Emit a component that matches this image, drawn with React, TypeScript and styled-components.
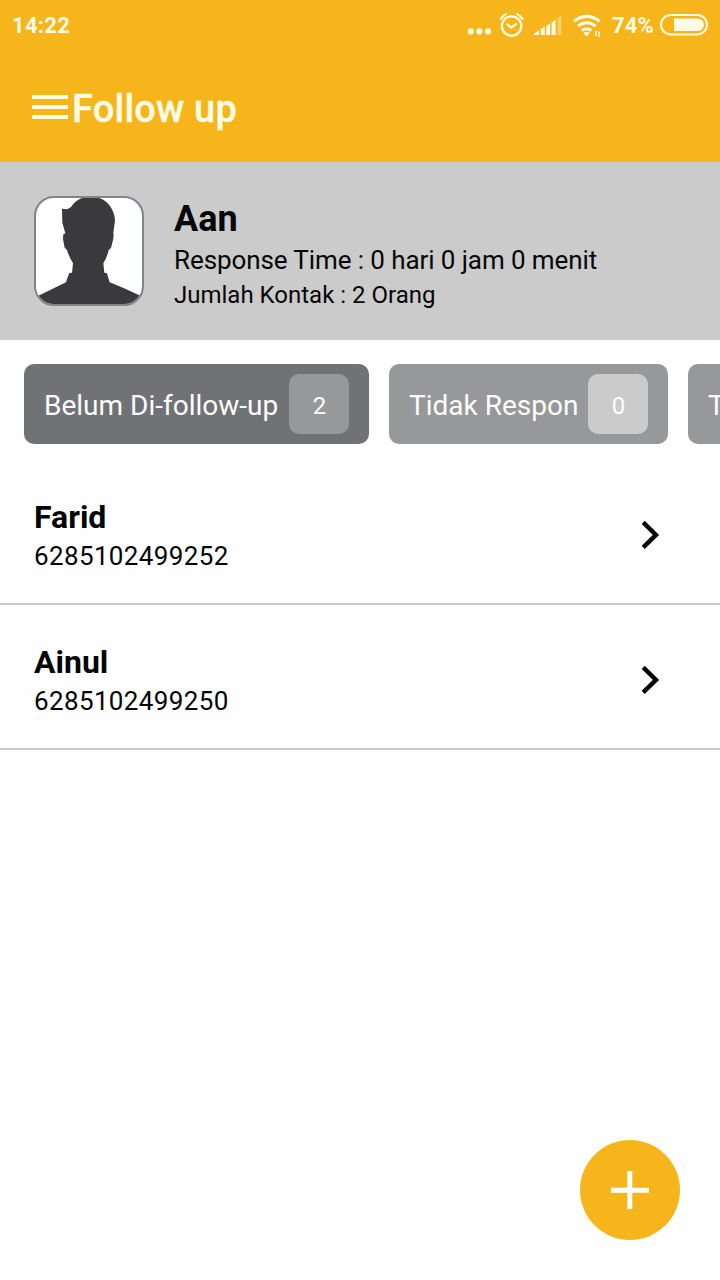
import React from 'react';
import styled, { createGlobalStyle } from 'styled-components';

const YELLOW = '#f5b51b';
const CREAM = '#fffce6';

const GlobalStyle = createGlobalStyle`
  *, *::before, *::after { box-sizing: border-box; }
  html, body { margin: 0; padding: 0; background: #fefefe; }
  body { font-family: Roboto, "Liberation Sans", sans-serif; color: #060606; }
  button { font: inherit; border: 0; padding: 0; margin: 0; }
`;

const Screen = styled.div`
  position: relative;
  display: flex;
  flex-direction: column;
  width: 720px;
  height: 1280px;
  overflow: hidden;
  background: #fefefe;
`;

const StatusBar = styled.div`
  display: flex;
  align-items: flex-start;
  justify-content: space-between;
  height: 50px;
  padding: 0 12px;
  background: ${YELLOW};
  color: ${CREAM};
  font-size: 22px;
  font-weight: 700;
  line-height: 26px;
`;

const Clock = styled.span`
  margin-top: 13px;
  letter-spacing: 0.3px;
`;

const StatusIcons = styled.div`
  display: flex;
  align-items: flex-start;
  height: 48px;
`;

const Battery = styled.span`
  margin: 13px 6px 0 11px;
  letter-spacing: 0.2px;
`;

const Header = styled.header`
  display: flex;
  align-items: center;
  height: 112px;
  padding: 0 32px 0;
  background: ${YELLOW};
`;

const MenuButton = styled.button`
  display: flex;
  flex-direction: column;
  gap: 6px;
  width: 36px;
  margin: 2px 4px 0 0;
  background: none;
`;

const MenuBar = styled.span`
  height: 4px;
  background: ${CREAM};
`;

const Title = styled.h1`
  margin: 6px 0 0;
  font-size: 38px;
  font-weight: 500;
  line-height: 48px;
  letter-spacing: 0.2px;
  -webkit-text-stroke: 0.4px ${CREAM};
  color: ${CREAM};
`;

const Profile = styled.section`
  display: flex;
  height: 178px;
  padding: 33px 34px 0;
  gap: 30px;
  background: #cbcbcb;
`;

const Avatar = styled.div`
  width: 110px;
  height: 110px;
  margin-top: 1px;
  border: 2px solid #7c868b;
  border-radius: 20px;
  overflow: hidden;
  background: #fff;

  svg { display: block; }
`;

const ProfileText = styled.div`
  display: flex;
  flex-direction: column;
`;

const Line = styled.div<{ $size: number; $height: number; $bold?: boolean; $spacing?: number }>`
  font-size: ${(p) => p.$size}px;
  line-height: ${(p) => p.$height}px;
  font-weight: ${(p) => (p.$bold ? 700 : 400)};
  letter-spacing: ${(p) => p.$spacing ?? 0}px;
  white-space: nowrap;
`;

const Tabs = styled.nav`
  display: flex;
  gap: 20px;
  height: 120px;
  padding: 24px 0 16px 24px;
  overflow: hidden;
`;

const Tab = styled.button<{ $active?: boolean; $width: number }>`
  display: flex;
  flex: 0 0 ${(p) => p.$width}px;
  align-items: center;
  justify-content: space-between;
  height: 80px;
  padding: 0 20px;
  border-radius: 10px;
  background: ${(p) => (p.$active ? '#717275' : '#979899')};
  color: #fdfdfd;
  font-size: 28px;
  white-space: nowrap;
`;

const TabLabel = styled.span`
  line-height: 34px;
  margin-top: 4px;
`;

const Count = styled.span<{ $active?: boolean }>`
  display: flex;
  align-items: center;
  justify-content: center;
  width: 60px;
  height: 60px;
  padding: 3px 0 0 1px;
  border-radius: 10px;
  background: ${(p) => (p.$active ? '#979899' : '#cbcbcb')};
  font-size: 24px;
  line-height: 28px;
`;

const List = styled.main`
  display: flex;
  flex-direction: column;
`;

const Contact = styled.div`
  display: flex;
  justify-content: space-between;
  height: 145px;
  padding: 36px 60px 0 34px;
  border-bottom: 2px solid #cacaca;

  svg { margin-top: 24px; }
`;

const Fab = styled.button`
  position: absolute;
  right: 40px;
  bottom: 40px;
  display: flex;
  align-items: center;
  justify-content: center;
  width: 100px;
  height: 100px;
  border-radius: 50%;
  background: ${YELLOW};
`;

const DotsIcon = () => (
  <svg width="24" height="48" viewBox="467 0 24 48" fill={CREAM}>
    <circle cx="470.8" cy="31.4" r="3.1" />
    <circle cx="479.4" cy="31.4" r="3.1" />
    <circle cx="488" cy="31.4" r="3.1" />
  </svg>
);

const AlarmIcon = () => (
  <svg width="42" height="48" viewBox="491 0 42 48" fill="none" stroke={CREAM} strokeWidth="2.2" strokeLinecap="round">
    <circle cx="511.6" cy="26" r="9.7" />
    <path d="M507.5 24.5l4 3.2 4.5-3.7M500.8 18.8q1.8-3.2 5-4.6M522.4 18.8q-1.8-3.2-5-4.6" />
  </svg>
);

const SignalIcon = () => (
  <svg width="40" height="48" viewBox="533 0 40 48" fill={CREAM}>
    <path d="M534 35v-1.4l5.2-3.4V35zM540.8 35v-5.9l4-2.4V35zM546.2 35v-9.2l4-2.4V35zM551.6 35V22.4l4-2.6V35z" />
    <path d="M557.6 35V17.8l3.8-2.2V35z" opacity=".4" />
  </svg>
);

const WifiIcon = () => (
  <svg width="28" height="48" viewBox="573 0 28 48" fill="none" stroke={CREAM} strokeWidth="3.1">
    <path d="M574 21.2q12.8-9.8 25.6 0" />
    <path d="M578 26q8.8-6.6 17.6 0" />
    <path d="M581.8 30.6q4.8-3.6 9.6 0" />
    <path d="M583.4 33q3.2-2.2 6.4 0l-3.2 3.6z" fill={CREAM} stroke="none" />
    <path d="M596 30.5v5.5M599 31.5v5.5" strokeWidth="1.5" />
  </svg>
);

const BatteryIcon = () => (
  <svg width="48" height="48" viewBox="660 0 48 48">
    <rect x="661" y="15" width="46" height="19.4" rx="9.7" fill="none" stroke={CREAM} strokeWidth="2" />
    <path d="M674 18.4h23.7a6.3 6.3 0 0 1 0 12.6H674z" fill={CREAM} />
  </svg>
);

const PersonSilhouette = () => (
  <svg width="106" height="106" viewBox="48 54 318 318">
    <path
      fill="#3a3a3c"
      d="M188 54H238C262 62 284 88 285 122L280 158Q282 165 279 180L273 204L266 210Q262 230 250 250L253 278L261 280Q264 292 269 307Q310 323 358 346L366 352V372H48V352L58 346L138 307Q143 290 148 279L156 278L159 250Q146 228 141 210L134 203L129 178L130 163L136 160L127 128L126 86L142 88Q155 82 160 72Q172 58 188 54Z"
    />
  </svg>
);

const ChevronIcon = () => (
  <svg width="20" height="30" viewBox="0 0 20 30" fill="none" stroke="#060606" strokeWidth="4.4">
    <path d="M3.2 2.4L16 14.9L3.2 27.4" />
  </svg>
);

const PlusIcon = () => (
  <svg width="38" height="38" viewBox="0 0 38 38" fill="#fff">
    <path d="M16.3 0h5v16.7H38v5H21.3V38h-5V21.7H0v-5h16.3z" />
  </svg>
);

const contacts = [
  { name: 'Farid', phone: '6285102499252' },
  { name: 'Ainul', phone: '6285102499250' },
];

export default function App() {
  return (
    <>
      <GlobalStyle />
      <Screen>
        <StatusBar>
          <Clock>14:22</Clock>
          <StatusIcons>
            <DotsIcon />
            <AlarmIcon />
            <SignalIcon />
            <WifiIcon />
            <Battery>74%</Battery>
            <BatteryIcon />
          </StatusIcons>
        </StatusBar>
        <Header>
          <MenuButton aria-label="Menu">
            <MenuBar />
            <MenuBar />
            <MenuBar />
          </MenuButton>
          <Title>Follow up</Title>
        </Header>
        <Profile>
          <Avatar>
            <PersonSilhouette />
          </Avatar>
          <ProfileText>
            <Line $size={36} $height={48} $bold>Aan</Line>
            <Line $size={26} $height={35} $spacing={-0.09}>Response Time : 0 hari 0 jam 0 menit</Line>
            <Line $size={24} $height={34}>Jumlah Kontak : 2 Orang</Line>
          </ProfileText>
        </Profile>
        <Tabs>
          <Tab $active $width={345}>
            <TabLabel>Belum Di-follow-up</TabLabel>
            <Count $active>2</Count>
          </Tab>
          <Tab $width={279}>
            <TabLabel>Tidak Respon</TabLabel>
            <Count>0</Count>
          </Tab>
          <Tab $width={279}>
            <TabLabel>T</TabLabel>
          </Tab>
        </Tabs>
        <List>
          {contacts.map((c) => (
            <Contact key={c.phone}>
              <div>
                <Line $size={32} $height={43} $bold>{c.name}</Line>
                <Line $size={26} $height={35} $spacing={0.36}>{c.phone}</Line>
              </div>
              <ChevronIcon />
            </Contact>
          ))}
        </List>
        <Fab aria-label="Add">
          <PlusIcon />
        </Fab>
      </Screen>
    </>
  );
}
